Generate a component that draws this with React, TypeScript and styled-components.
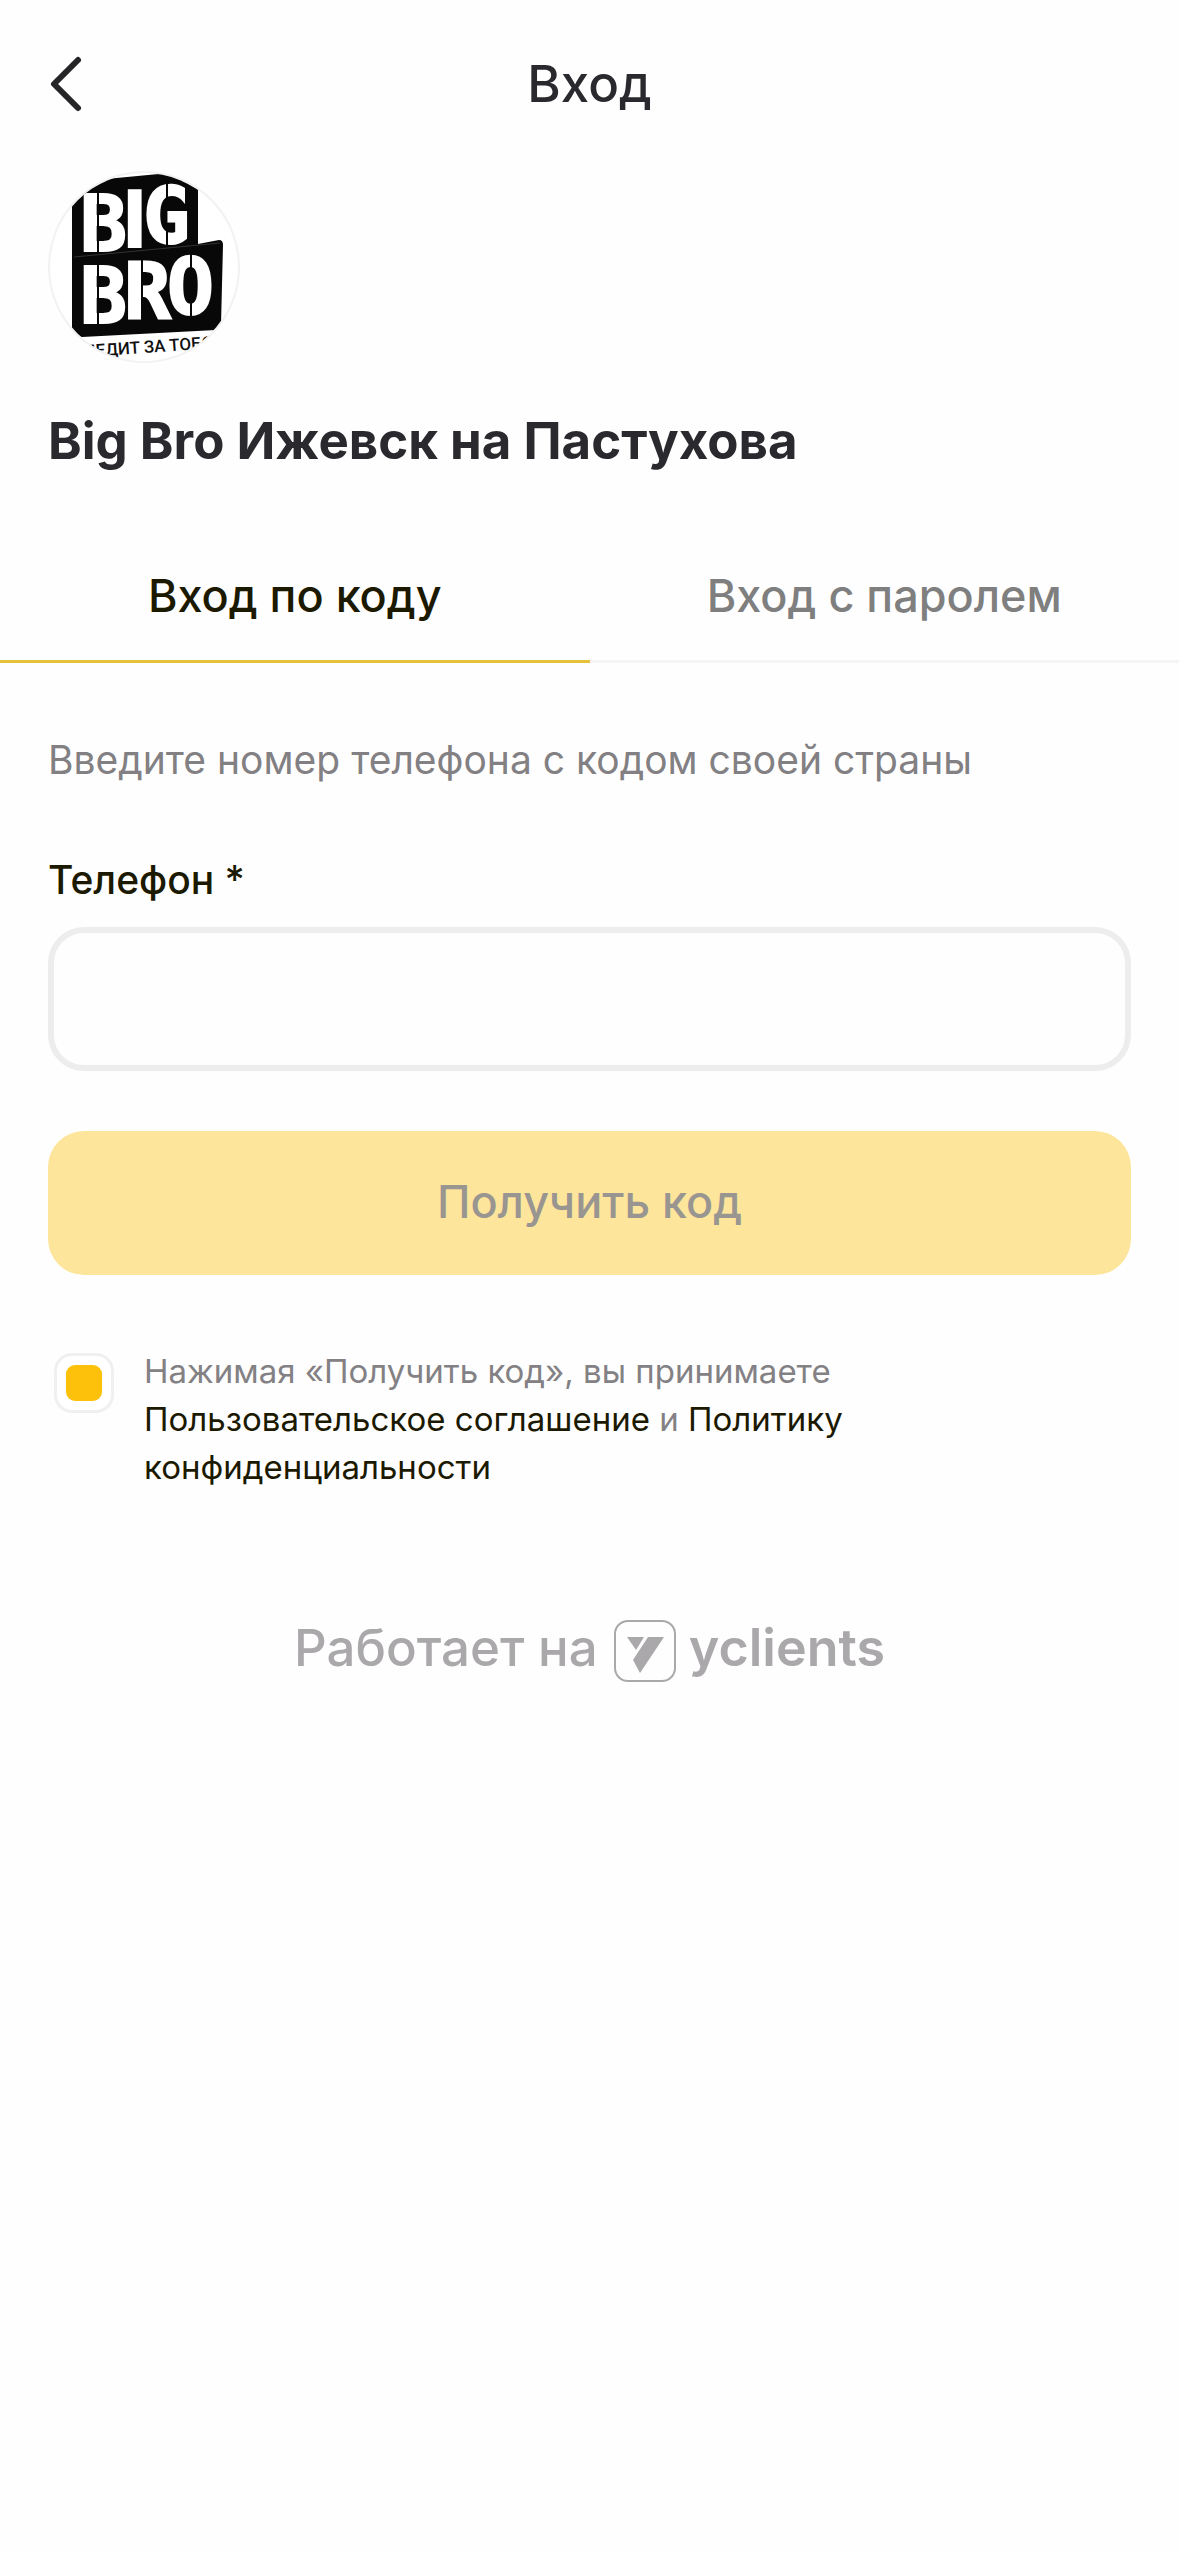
import React, { useState } from "react";
import styled, { createGlobalStyle } from "styled-components";

const GlobalStyle = createGlobalStyle`
  *, *::before, *::after { box-sizing: border-box; }
  body {
    margin: 0;
    background: #fefefe;
    font-family: Inter, "Liberation Sans", sans-serif;
    color: #2a292e;
  }
  button, input { font: inherit; }
`;

const Page = styled.div`
  display: flex;
  flex-direction: column;
`;

const Header = styled.header`
  display: grid;
  grid-template-columns: 96px 1fr 96px;
  align-items: center;
  height: 168px;
  padding: 0 24px;
`;

const BackButton = styled.button`
  display: flex;
  align-items: center;
  height: 96px;
  padding: 0 24px;
  border: 0;
  background: none;
  color: #252528;
`;

const Title = styled.h1`
  margin: 0;
  text-align: center;
  font-size: 51px;
  line-height: 60px;
  font-weight: 500;
`;

const Company = styled.section`
  display: flex;
  flex-direction: column;
  gap: 48px;
  padding: 3px 48px 60px;
`;

const Avatar = styled.svg`
  display: block;
  width: 192px;
  height: 192px;
`;

const CompanyName = styled.h2`
  margin: 0;
  font-size: 51px;
  line-height: 60px;
  font-weight: 700;
`;

const Tabs = styled.div`
  display: grid;
  grid-template-columns: 1fr 1fr;
`;

const Tab = styled.button<{ $active: boolean }>`
  height: 132px;
  padding: 0;
  border: 0;
  border-bottom: 3px solid ${(p) => (p.$active ? "#e6c23c" : "#f4f4f4")};
  background: none;
  color: ${(p) => (p.$active ? "#1b1900" : "#7f7f7f")};
  font-size: 45px;
  font-weight: 500;
`;

const Form = styled.form`
  display: flex;
  flex-direction: column;
  padding: 73px 48px 0;
`;

const Hint = styled.p`
  margin: 0 0 72px;
  color: #828083;
  font-size: 39px;
  line-height: 48px;
`;

const FieldLabel = styled.label`
  margin-bottom: 23px;
  color: #1b1900;
  font-size: 39px;
  line-height: 48px;
  font-weight: 500;
`;

const PhoneInput = styled.input`
  width: 100%;
  height: 144px;
  padding: 0 36px;
  border: 6px solid #ededed;
  border-radius: 36px;
  background: #fefefe;
  font-size: 45px;
  outline: none;
`;

const SubmitButton = styled.button`
  height: 144px;
  margin: 60px 0 72px;
  padding: 0 36px 3px;
  border: 0;
  border-radius: 36px;
  background: #fee59c;
  color: #999590;
  font-size: 45px;
  font-weight: 500;
`;

const Consent = styled.div`
  display: flex;
  align-items: flex-start;
  gap: 30px;
  padding: 0 6px;
`;

const Checkbox = styled.input`
  appearance: none;
  display: grid;
  place-items: center;
  flex: none;
  width: 60px;
  height: 60px;
  margin: 6px 0 0;
  border: 3px solid #f0f0f0;
  border-radius: 18px;
  background: #fff;

  &:checked::before {
    content: "";
    width: 36px;
    height: 36px;
    border-radius: 9px;
    background: #fdc10b;
  }
`;

const ConsentText = styled.label`
  max-width: 720px;
  color: #838184;
  font-size: 33px;
  line-height: 48px;
`;

const ConsentLink = styled.a`
  color: #1b1900;
  text-decoration: none;
`;

const Footer = styled.footer`
  display: flex;
  justify-content: center;
  align-items: center;
  gap: 16px;
  padding-top: 123px;
  color: #aaa8ab;
  font-size: 51px;
  line-height: 60px;
  font-weight: 500;
`;

const Brand = styled.a`
  display: flex;
  align-items: center;
  gap: 13px;
  color: inherit;
  font-size: 52px;
  font-weight: 600;
  text-decoration: none;
`;

const BrandMark = styled.svg`
  display: block;
  width: 62px;
  height: 62px;
  margin-top: 6px;
`;

const BigBroLogo = () => (
  <Avatar viewBox="18 21 192 192" role="img" aria-label="Big Bro">
    <defs>
      <clipPath id="avatar-circle">
        <circle cx="114" cy="117" r="94" />
      </clipPath>
    </defs>
    <circle cx="114" cy="117" r="95" fill="#fff" stroke="#f2f2f2" strokeWidth="2" />
    <g clipPath="url(#avatar-circle)">
      <path
        d="M42 53 58 38 76 29 134 23.500Q150 26 168 39V94L189 90Q193 90 193 95L191 175 186 180 52 187Q47 187 42 180Z"
        fill="#080808"
      />
      <path d="M44 107 190 93" stroke="#333" strokeWidth="1" />
      <g fill="#fff" stroke="#fff" strokeWidth="2" fontWeight="700">
        <g fontFamily="'DejaVu Sans Mono', monospace" fontSize="78">
          <text x="50" y="101">B</text>
          <text x="113" y="93">G</text>
          <text x="50 94 137" y="173 169 164">BRO</text>
        </g>
        <text x="93" y="97" fontFamily="Roboto, sans-serif" fontSize="80">I</text>
      </g>
      <path
        d="M68 40V104M68 112V176M112 108V172M137 32V48M137 78V96M161 102V119M161 152V168"
        stroke="#080808"
        strokeWidth="2"
      />
      <text
        transform="rotate(-4 114 204)"
        x="54"
        y="203"
        fill="#111"
        fontFamily="Roboto, sans-serif"
        fontSize="17"
        fontWeight="500"
      >
        ЛЕДИТ ЗА ТОБОЙ
      </text>
    </g>
  </Avatar>
);

export default function App() {
  const [mode, setMode] = useState<"code" | "password">("code");
  const [phone, setPhone] = useState("");

  return (
    <Page>
      <GlobalStyle />
      <Header>
        <BackButton type="button" aria-label="Назад">
          <svg width="36" height="60" viewBox="0 0 36 60" fill="none" stroke="currentColor">
            <path d="M30 6 6 30 30 54" strokeWidth="6" strokeLinecap="round" strokeLinejoin="round" />
          </svg>
        </BackButton>
        <Title>Вход</Title>
      </Header>

      <Company>
        <BigBroLogo />
        <CompanyName>Big Bro Ижевск на Пастухова</CompanyName>
      </Company>

      <Tabs role="tablist">
        <Tab type="button" role="tab" aria-selected={mode === "code"} $active={mode === "code"} onClick={() => setMode("code")}>
          Вход по коду
        </Tab>
        <Tab type="button" role="tab" aria-selected={mode === "password"} $active={mode === "password"} onClick={() => setMode("password")}>
          Вход с паролем
        </Tab>
      </Tabs>

      <Form onSubmit={(e) => e.preventDefault()}>
        <Hint>Введите номер телефона с кодом своей страны</Hint>
        <FieldLabel htmlFor="phone">Телефон *</FieldLabel>
        <PhoneInput id="phone" type="tel" value={phone} onChange={(e) => setPhone(e.target.value)} />
        <SubmitButton type="submit" disabled={!phone}>
          Получить код
        </SubmitButton>
        <Consent>
          <Checkbox id="consent" type="checkbox" defaultChecked />
          <ConsentText htmlFor="consent">
            Нажимая «Получить код», вы принимаете{" "}
            <ConsentLink href="#agreement">Пользовательское соглашение</ConsentLink> и{" "}
            <ConsentLink href="#privacy">Политику конфиденциальности</ConsentLink>
          </ConsentText>
        </Consent>
      </Form>

      <Footer>
        <span>Работает на</span>
        <Brand href="#yclients">
          <BrandMark viewBox="0 0 62 62" fill="none" aria-hidden="true">
            <rect x="1" y="1" width="60" height="60" rx="13" stroke="currentColor" strokeWidth="2" />
            <path d="M13 17H30L22 30ZM34 17H50L26 53 19 40Z" fill="currentColor" />
          </BrandMark>
          yclients
        </Brand>
      </Footer>
    </Page>
  );
}
